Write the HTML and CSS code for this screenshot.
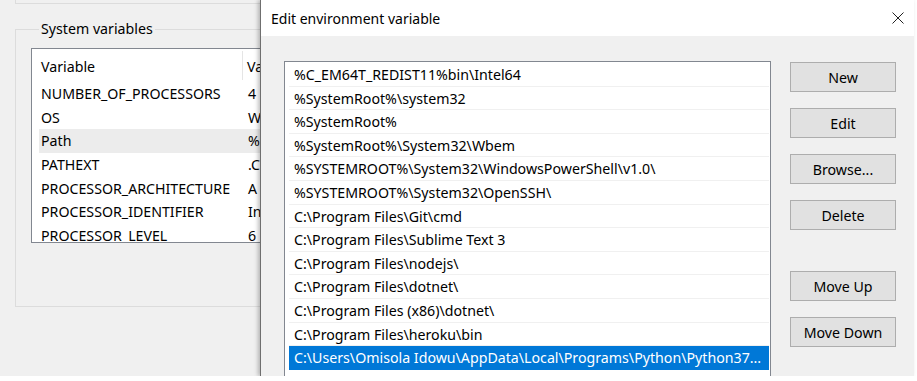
FILE: index.html
```html
<!DOCTYPE html>
<html lang="en">
<head>
    <meta charset="UTF-8">
    <title>Edit environment variable</title>
    <link rel="stylesheet" href="styles.css">
</head>
<body>
    <div class="screen">
        <div class="env-window">
            <div class="user-group"></div>
            <fieldset class="sys-group">
                <legend>System variables</legend>
                <!-- only the part not hidden behind the dialog -->
                <div class="var-list">
                    <div class="var-head">
                        <div class="col-name">Variable</div>
                        <div class="col-value">Va</div>
                    </div>
                    <div class="var-row"><span>NUMBER_OF_PROCESSORS</span><span>4</span></div>
                    <div class="var-row"><span>OS</span><span>W</span></div>
                    <div class="var-row hover"><span>Path</span><span>%</span></div>
                    <div class="var-row"><span>PATHEXT</span><span>.C</span></div>
                    <div class="var-row"><span>PROCESSOR_ARCHITECTURE</span><span>A</span></div>
                    <div class="var-row"><span>PROCESSOR_IDENTIFIER</span><span>In</span></div>
                    <div class="var-row"><span>PROCESSOR_LEVEL</span><span>6</span></div>
                </div>
            </fieldset>
        </div>

        <div class="dialog">
            <div class="titlebar">
                <span class="title">Edit environment variable</span>
                <svg class="close" width="12" height="12" viewBox="0 0 12 12">
                    <path d="M0.5 0.5 L11.5 11.5 M11.5 0.5 L0.5 11.5" stroke="#222" stroke-width="1" fill="none"/>
                </svg>
            </div>
            <div class="dialog-body">
                <div class="path-list">
                    <div class="path-row">%C_EM64T_REDIST11%bin\Intel64</div>
                    <div class="path-row">%SystemRoot%\system32</div>
                    <div class="path-row">%SystemRoot%</div>
                    <div class="path-row">%SystemRoot%\System32\Wbem</div>
                    <div class="path-row">%SYSTEMROOT%\System32\WindowsPowerShell\v1.0\</div>
                    <div class="path-row">%SYSTEMROOT%\System32\OpenSSH\</div>
                    <div class="path-row">C:\Program Files\Git\cmd</div>
                    <div class="path-row">C:\Program Files\Sublime Text 3</div>
                    <div class="path-row">C:\Program Files\nodejs\</div>
                    <div class="path-row">C:\Program Files\dotnet\</div>
                    <div class="path-row">C:\Program Files (x86)\dotnet\</div>
                    <div class="path-row">C:\Program Files\heroku\bin</div>
                    <div class="path-row selected">C:\Users\Omisola Idowu\AppData\Local\Programs\Python\Python37...</div>
                </div>
                <div class="actions">
                    <button class="btn">New</button>
                    <button class="btn">Edit</button>
                    <button class="btn">Browse...</button>
                    <button class="btn">Delete</button>
                    <button class="btn push">Move Up</button>
                    <button class="btn">Move Down</button>
                </div>
            </div>
        </div>
    </div>
</body>
</html>
```

FILE: styles.css
```css
body {
    margin: 0;
    font-family: "Noto Sans", "Open Sans", sans-serif;
    font-size: 14.2px;
    color: #000;
    background: #fff;
}
.screen {
    position: relative;
    width: 917px;
    height: 376px;
    overflow: hidden;
}
.env-window {
    width: 913px;
    height: 376px;
    background: #f0f0f0;
    padding-left: 15px;
    box-sizing: border-box;
}
.user-group {
    width: 600px;
    height: 3px;
    border-left: 1px solid #dcdcdc;
    border-bottom: 1px solid #dcdcdc;
}
.sys-group {
    width: 600px;
    height: 288px;
    margin: 15px 0 0 0;
    padding: 9px 0 0 15px;
    border: 1px solid #dcdcdc;
    box-sizing: border-box;
    min-width: 0;
}
.sys-group legend {
    padding: 0 2px;
    margin-left: 8px;
    line-height: 20px;
}
/* list is cut where the dialog covers it */
.var-list {
    width: 230px;
    height: 195px;
    background: #fff;
    border: 1px solid #828790;
    border-right: none;
    box-sizing: border-box;
    overflow: hidden;
}
.var-head {
    display: grid;
    grid-template-columns: 211px 1fr;
    height: 33px;
}
.var-head div {
    overflow: hidden;
    white-space: nowrap;
}
.var-head .col-name {
    padding-left: 9px;
    border-right: 1px solid #e5e5e5;
    margin: 2px 0;
    line-height: 32px;
}
.var-head .col-value {
    padding-left: 4px;
    line-height: 36px;
}
.var-row {
    display: grid;
    grid-template-columns: 204px 1fr;
    height: 23.7px;
    line-height: 23.7px;
    margin-left: 7px;
    white-space: nowrap;
}
.var-row span {
    overflow: hidden;
}
.var-row span:first-child {
    padding-left: 2px;
}
.var-row span:last-child {
    padding-left: 5px;
}
.var-row.hover {
    background: #ececec;
}

/* dialog on top */
.dialog {
    position: absolute;
    left: 260px;
    top: 0;
    width: 653px;
    height: 376px;
    display: flex;
    flex-direction: column;
    background: #f0f0f0;
    border-left: 1px solid #6f6f6f;
    box-shadow: -2px 0 4px rgba(0, 0, 0, 0.25);
}
.titlebar {
    height: 36px;
    flex: none;
    display: flex;
    align-items: center;
    justify-content: space-between;
    background: #fff;
    padding: 0 10px 0 10px;
}
.title {
    font-size: 14px;
}
.dialog-body {
    display: flex;
    gap: 19px;
    padding: 25px 0 0 23px;
    flex: 1;
    min-height: 0;
}
.path-list {
    width: 487px;
    height: 340px;
    flex: none;
    background: #fff;
    border: 1px solid #828790;
    box-sizing: border-box;
    padding: 1px 1px 0 4px;
}
.path-row {
    height: 23.6px;
    line-height: 23.6px;
    padding-left: 5px;
    border-bottom: 1px solid #f0f0f0;
    box-sizing: border-box;
    white-space: nowrap;
    overflow: hidden;
}
.path-row.selected {
    background: #0078d7;
    color: #fff;
    border-bottom-color: #0078d7;
}
.actions {
    display: flex;
    flex-direction: column;
    gap: 16px;
    padding-top: 1px;
}
.btn {
    width: 106px;
    height: 30px;
    background: #e1e1e1;
    border: 1px solid #adadad;
    font-family: inherit;
    font-size: 14.2px;
    color: #000;
    padding: 0;
}
.btn.push {
    margin-top: 25px;
}
```
